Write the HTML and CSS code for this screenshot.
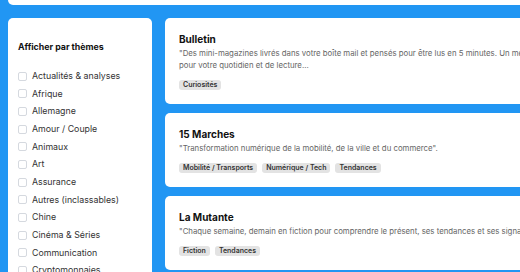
FILE: index.html
```html
<!DOCTYPE html>
<html lang="fr">
<head>
    <meta charset="UTF-8">
    <meta name="viewport" content="width=device-width, initial-scale=1.0">
    <title>Newsletters par thèmes</title>
    <link rel="stylesheet" href="styles.css">
</head>
<body>
    <div class="page">
        <header class="top-bar"></header>
        <div class="layout">
            <aside class="sidebar">
                <h3>Afficher par thèmes</h3>
                <ul class="themes">
                    <li><span class="box"></span>Actualités &amp; analyses</li>
                    <li><span class="box"></span>Afrique</li>
                    <li><span class="box"></span>Allemagne</li>
                    <li><span class="box"></span>Amour / Couple</li>
                    <li><span class="box"></span>Animaux</li>
                    <li><span class="box"></span>Art</li>
                    <li><span class="box"></span>Assurance</li>
                    <li><span class="box"></span>Autres (inclassables)</li>
                    <li><span class="box"></span>Chine</li>
                    <li><span class="box"></span>Cinéma &amp; Séries</li>
                    <li><span class="box"></span>Communication</li>
                    <li><span class="box"></span>Cryptomonnaies</li>
                </ul>
            </aside>
            <main class="list">
                <section class="card">
                    <h2>Bulletin</h2>
                    <p>"Des mini-magazines livrés dans votre boîte mail et pensés pour être lus en 5 minutes. Un média léger, idéal pour votre quotidien et de lecture...</p>
                    <div class="tags">
                        <span class="tag">Curiosités</span>
                    </div>
                </section>
                <section class="card">
                    <h2>15 Marches</h2>
                    <p>"Transformation numérique de la mobilité, de la ville et du commerce".</p>
                    <div class="tags">
                        <span class="tag">Mobilité / Transports</span>
                        <span class="tag">Numérique / Tech</span>
                        <span class="tag">Tendances</span>
                    </div>
                </section>
                <section class="card">
                    <h2>La Mutante</h2>
                    <p>"Chaque semaine, demain en fiction pour comprendre le présent, ses tendances et ses signaux faibles"</p>
                    <div class="tags">
                        <span class="tag">Fiction</span>
                        <span class="tag">Tendances</span>
                    </div>
                </section>
            </main>
        </div>
    </div>
</body>
</html>
```

FILE: styles.css
```css
body {
    font-family: Inter, 'Noto Sans', sans-serif;
    margin: 0;
    padding: 0;
    color: #222;
    background-color: #2196f3;
    overflow: hidden;
}
.page {
    width: 900px;
    padding-left: 8px;
}
.top-bar {
    height: 5px;
    background-color: #fff;
    border-radius: 0 0 0 5px;
}
.layout {
    display: flex;
    align-items: flex-start;
    gap: 13px;
    margin-top: 13px;
}
.sidebar {
    width: 144px;
    box-sizing: border-box;
    background-color: #fff;
    border-radius: 5px;
    padding: 22px 10px 20px;
}
.sidebar h3 {
    margin: 0 0 17px;
    font-size: 8.8px;
    line-height: 13px;
    font-weight: 700;
    color: #111;
}
.themes {
    list-style: none;
    margin: 0;
    padding: 0;
    display: flex;
    flex-direction: column;
    gap: 5.68px;
}
.themes li {
    display: flex;
    align-items: center;
    font-size: 8.8px;
    line-height: 12px;
    color: #333;
}
.box {
    width: 9px;
    height: 9px;
    box-sizing: border-box;
    border: 1px solid #d5d9df;
    border-radius: 2px;
    margin-right: 5px;
}
.list {
    width: 438px;
    display: flex;
    flex-direction: column;
    gap: 9px;
}
.card {
    background-color: #fff;
    border-radius: 5px;
    padding: 14px 14px 13.5px;
}
.card h2 {
    margin: 0 0 2px;
    font-size: 10px;
    line-height: 14px;
    font-weight: 700;
    color: #111;
}
.card p {
    margin: 0;
    font-size: 7.8px;
    line-height: 11.5px;
    color: #666;
}
.tags {
    display: flex;
    gap: 5px;
    margin-top: 9px;
}
.tag {
    background-color: #e3e3e3;
    color: #333;
    font-size: 7px;
    font-weight: 600;
    line-height: 10px;
    padding: 0 4px;
    border-radius: 3px;
}
```
